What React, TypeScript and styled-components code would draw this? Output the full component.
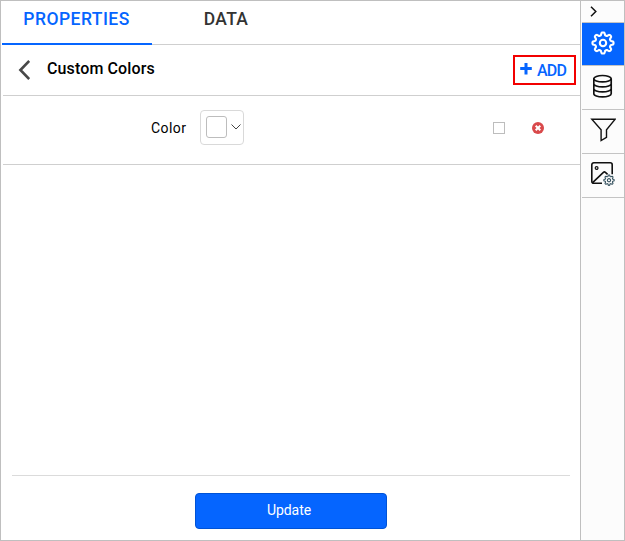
import React from 'react';
import styled, { createGlobalStyle } from 'styled-components';

const GlobalStyle = createGlobalStyle`
  *, *::before, *::after { box-sizing: border-box; }
  body { margin: 0; background: #fff; font-family: Roboto, "Liberation Sans", sans-serif; }
  button { font: inherit; padding: 0; margin: 0; background: none; border: 0; }
  svg { display: block; flex: none; }
`;

const Frame = styled.div`
  display: flex;
  width: 625px;
  height: 541px;
  border: 1px solid #bfbfbf;
  background: #fff;
  overflow: hidden;
`;

const Panel = styled.main`
  display: flex;
  flex-direction: column;
  width: 579px;
  padding-left: 1px;
`;

const Tabs = styled.nav`
  display: flex;
  height: 44px;
  border-bottom: 1px solid #cfcfcf;
`;

const Tab = styled.button<{ $active?: boolean }>`
  width: ${(p) => (p.$active ? 150 : 148)}px;
  height: 44px;
  padding: 0 ${(p) => (p.$active ? '1px 6px 0' : '0 8px')};
  border-bottom: ${(p) => (p.$active ? '2px solid #0565ff' : '0')};
  color: ${(p) => (p.$active ? '#0565ff' : '#333')};
  font-size: 17.5px;
  font-weight: 500;
  letter-spacing: ${(p) => (p.$active ? 0.46 : 0.35)}px;
  white-space: nowrap;
`;

const Header = styled.header`
  display: flex;
  align-items: center;
  height: 51px;
  margin-left: 1px;
  padding: 0 4px 0 15px;
  border-bottom: 1px solid #cfcfcf;
`;

const Title = styled.h1`
  flex: 1;
  margin: -3px 0 0 17px;
  color: #000;
  font-size: 16px;
  font-weight: 500;
  line-height: 20px;
  letter-spacing: 0.12px;
`;

const AddButton = styled.button`
  display: flex;
  align-items: center;
  gap: 5px;
  width: 63px;
  height: 30px;
  padding: 0 0 2px 5px;
  border: 2px solid #f20000;
  color: #0565ff;
  font-size: 16px;
  font-weight: 500;
  letter-spacing: -0.8px;
`;

const AddLabel = styled.span`
  padding-top: 2px;
`;

const ColorRow = styled.section`
  display: flex;
  align-items: center;
  height: 69px;
  margin-left: 1px;
  padding: 0 36px 6px 148px;
  border-bottom: 1px solid #cfcfcf;
`;

const ColorLabel = styled.label`
  width: 49px;
  padding-top: 2px;
  color: #000;
  font-size: 14px;
  line-height: 20px;
  letter-spacing: 0.42px;
`;

const ColorPicker = styled.button`
  display: flex;
  align-items: center;
  gap: 4px;
  width: 44px;
  height: 35px;
  padding-left: 5px;
  border: 1px solid #d9d9d9;
  border-radius: 4px;
`;

const Swatch = styled.span`
  width: 21px;
  height: 22px;
  border: 1px solid #bdbdbd;
  border-radius: 3px;
  background: #fff;
`;

const RowActions = styled.div`
  display: flex;
  align-items: center;
  gap: 27px;
  margin: 2px 0 0 auto;
`;

const Checkbox = styled.span`
  width: 12px;
  height: 12px;
  border: 1px solid #bdbdbd;
`;

const Footer = styled.footer`
  display: flex;
  justify-content: center;
  height: 65px;
  margin: auto 10px 0;
  padding-top: 17px;
  border-top: 1px solid #dbdbdb;
`;

const UpdateButton = styled.button`
  width: 192px;
  height: 36px;
  padding: 0 4px 2px 0;
  border: 1px solid #0053d6;
  border-radius: 4px;
  background: #0565ff;
  color: #fff;
  font-size: 14px;
  letter-spacing: -0.05px;
`;

const Rail = styled.aside`
  width: 44px;
  padding-left: 1px;
  border-left: 1px solid #bfbfbf;
  background: #fcfcfc;
`;

const RailItem = styled.button<{ $active?: boolean; $short?: boolean }>`
  display: flex;
  align-items: center;
  justify-content: ${(p) => (p.$short ? 'flex-start' : 'center')};
  width: 100%;
  height: ${(p) => (p.$short ? 22 : p.$active ? 43 : 44)}px;
  padding: 0 0 ${(p) => (p.$short ? 1 : 3)}px ${(p) => (p.$short ? 8 : 0)}px;
  border-bottom: 1px solid #c4c4c4;
  background: ${(p) => (p.$active ? '#0565ff' : 'transparent')};
  color: ${(p) => (p.$active ? '#fff' : '#111')};
`;

/** Outline of a soft-toothed cog centred on the origin. */
function cogPath(radius: number, depth: number, teeth: number) {
  const steps = teeth * 16;
  const points = Array.from({ length: steps }, (_, i) => {
    const angle = (i / steps) * Math.PI * 2;
    const r = radius + depth * Math.tanh(2 * Math.cos(teeth * angle));
    return `${(r * Math.sin(angle)).toFixed(2)} ${(-r * Math.cos(angle)).toFixed(2)}`;
  });
  return `M${points.join('L')}Z`;
}

const GearIcon = () => (
  <svg width="24" height="24" viewBox="-12 -12 24 24" fill="none" stroke="currentColor" strokeWidth="2.1" strokeLinejoin="round">
    <path d={cogPath(9.2, 1.4, 8)} />
    <circle r="3.2" />
  </svg>
);

const BackIcon = () => (
  <svg width="12" height="20" viewBox="0 0 12 20" fill="none" stroke="#484848" strokeWidth="2.6">
    <path d="M11.2 1 2.4 10l8.8 9" />
  </svg>
);

const PlusIcon = () => (
  <svg width="12" height="12" viewBox="0 0 12 12" stroke="currentColor" strokeWidth="3">
    <path d="M6 0v11.4M.2 5.5h11.6" />
  </svg>
);

const CaretIcon = () => (
  <svg width="10" height="6" viewBox="0 0 10 6" fill="none" stroke="#444">
    <path d="m.5.5 4.5 4.5L9.5.5" />
  </svg>
);

const RemoveIcon = () => (
  <svg width="12" height="12" viewBox="0 0 12 12">
    <circle cx="6" cy="6" r="6" fill="#d9494b" />
    <path d="m3.7 3.7 4.6 4.6m0-4.6L3.7 8.3" stroke="#fff" strokeWidth="2" />
  </svg>
);

const ExpandIcon = () => (
  <svg width="7" height="11" viewBox="0 0 7 11" fill="none" stroke="currentColor" strokeWidth="1.5">
    <path d="m1 .8 4.8 4.7L1 10.2" />
  </svg>
);

const DatabaseIcon = () => (
  <svg width="20" height="24" viewBox="0 0 20 24" fill="none" stroke="currentColor" strokeWidth="1.7">
    <ellipse cx="9.5" cy="4.7" rx="8.7" ry="3.2" />
    <path d="M.8 4.7v15c0 1.8 3.9 3.2 8.7 3.2s8.7-1.4 8.7-3.2v-15M.8 9.7c0 1.8 3.9 3.2 8.7 3.2s8.7-1.4 8.7-3.2M.8 14.7c0 1.8 3.9 3.2 8.7 3.2s8.7-1.4 8.7-3.2" />
  </svg>
);

const FilterIcon = () => (
  <svg width="26" height="24" viewBox="0 0 26 24" fill="none" stroke="currentColor" strokeWidth="1.4">
    <path d="M1.8 1.2h23.4l-8.7 10.5v7.7l-5.4 3.2V11.7z" />
  </svg>
);

const ImageIcon = () => (
  <svg width="24" height="24" viewBox="0 0 24 24" fill="none" stroke="currentColor" strokeWidth="1.6">
    <path d="M11 21.2H2.8a2 2 0 0 1-2-2V2.8a2 2 0 0 1 2-2h16.4a2 2 0 0 1 2 2v9.4" />
    <circle cx="5.6" cy="6" r="1.4" strokeWidth="1.2" />
    <path d="m1.6 20.6 10.8-10.2c.8-.7 1.3-.7 2 0l2.2 2" />
    <g transform="translate(18 18.2)" stroke="#35515e" strokeWidth="1.1">
      <path d={cogPath(4.5, 0.7, 8)} fill="#fcfcfc" />
      <circle r="1.6" />
    </g>
  </svg>
);

export default function App() {
  return (
    <>
      <GlobalStyle />
      <Frame>
        <Panel>
          <Tabs>
            <Tab $active>PROPERTIES</Tab>
            <Tab>DATA</Tab>
          </Tabs>
          <Header>
            <BackIcon />
            <Title>Custom Colors</Title>
            <AddButton>
              <PlusIcon />
              <AddLabel>ADD</AddLabel>
            </AddButton>
          </Header>
          <ColorRow>
            <ColorLabel>Color</ColorLabel>
            <ColorPicker aria-label="Choose color">
              <Swatch />
              <CaretIcon />
            </ColorPicker>
            <RowActions>
              <Checkbox role="checkbox" aria-checked="false" />
              <RemoveIcon />
            </RowActions>
          </ColorRow>
          <Footer>
            <UpdateButton>Update</UpdateButton>
          </Footer>
        </Panel>
        <Rail>
          <RailItem $short aria-label="Collapse panel"><ExpandIcon /></RailItem>
          <RailItem $active aria-label="Properties"><GearIcon /></RailItem>
          <RailItem aria-label="Data sources"><DatabaseIcon /></RailItem>
          <RailItem aria-label="Filters"><FilterIcon /></RailItem>
          <RailItem aria-label="Image settings"><ImageIcon /></RailItem>
        </Rail>
      </Frame>
    </>
  );
}
